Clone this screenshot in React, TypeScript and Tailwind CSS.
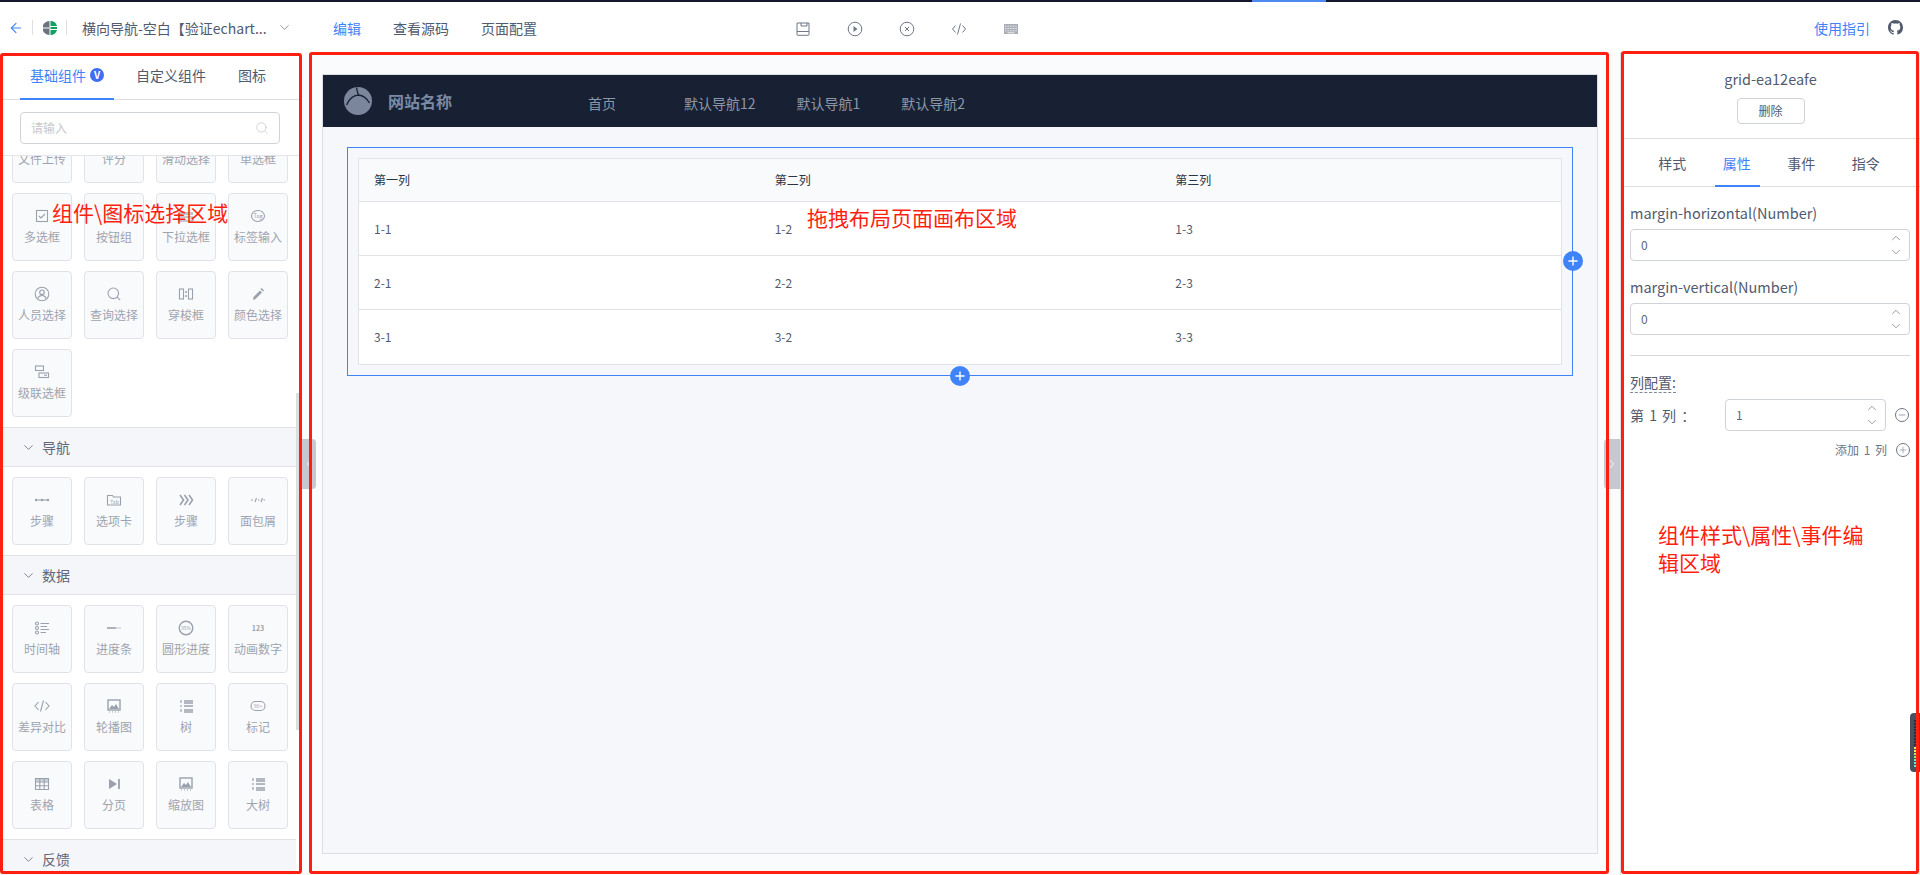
import { ArrowLeft, ChevronDown, ChevronLeft, ChevronRight, ChevronUp, Minus, Plus, Search } from "lucide-react";
import type { ReactNode } from "react";

type CardItem = {
  label: string;
  icon?: ReactNode;
};

const stroke = { fill: "none", stroke: "currentColor", strokeWidth: 1.1 };

function Glyph({ children }: { children: ReactNode }) {
  return (
    <svg viewBox="0 0 16 16" className="h-4 w-4 text-[#9aa1ad]">
      {children}
    </svg>
  );
}

const treeIcon = (
  <Glyph>
    <path d="M2 2h2v3H2zM2 7h2v2H2zM2 11h2v3H2z" fill="currentColor" opacity="0.6" />
    <path d="M6 3h9M6 5h9M6 8h9M6 12h9M6 14h9" {...stroke} strokeWidth="1.4" />
  </Glyph>
);

const imageIcon = (
  <Glyph>
    <rect x="2" y="2" width="12" height="10" {...stroke} strokeWidth="1.4" />
    <path d="M3 11l3-4 2 2 2-3 3 5z" fill="currentColor" />
    <path d="M3 14h1M6 14h1M9 14h1M12 14h1" {...stroke} />
  </Glyph>
);

const componentCards: CardItem[] = [
  { label: "文件上传" },
  { label: "评分" },
  { label: "滑动选择" },
  { label: "单选框" },
  {
    label: "多选框",
    icon: (
      <Glyph>
        <rect x="2.5" y="2.5" width="11" height="11" {...stroke} />
        <path d="M5 8l2 2 4-4" {...stroke} />
      </Glyph>
    ),
  },
  {
    label: "按钮组",
    icon: (
      <Glyph>
        <rect x="2" y="5" width="12" height="6" {...stroke} />
      </Glyph>
    ),
  },
  {
    label: "下拉选框",
    icon: (
      <Glyph>
        <rect x="1" y="4" width="14" height="3" fill="currentColor" opacity="0.6" />
        <rect x="1" y="9" width="14" height="4" {...stroke} />
      </Glyph>
    ),
  },
  {
    label: "标签输入",
    icon: (
      <Glyph>
        <ellipse cx="8" cy="8" rx="6.5" ry="5.5" {...stroke} />
        <text x="8" y="10" fontSize="5.5" textAnchor="middle" fill="currentColor">
          Tag
        </text>
      </Glyph>
    ),
  },
  {
    label: "人员选择",
    icon: (
      <Glyph>
        <circle cx="8" cy="8" r="6.8" {...stroke} />
        <circle cx="8" cy="6.3" r="2.3" {...stroke} />
        <path d="M3.8 12.5c.7-2.2 2.2-3 4.2-3s3.5.8 4.2 3" {...stroke} />
      </Glyph>
    ),
  },
  {
    label: "查询选择",
    icon: (
      <Glyph>
        <circle cx="7.3" cy="7.3" r="5.3" {...stroke} />
        <path d="M11.2 11.2l3 3" {...stroke} />
      </Glyph>
    ),
  },
  {
    label: "穿梭框",
    icon: (
      <Glyph>
        <rect x="1.5" y="3" width="4" height="10" {...stroke} />
        <rect x="10.5" y="3" width="4" height="10" {...stroke} />
        <path d="M7 6h2M7 10h2" {...stroke} strokeWidth="1.5" />
      </Glyph>
    ),
  },
  {
    label: "颜色选择",
    icon: (
      <Glyph>
        <path d="M3 14l.5-3 6.5-6.5 2 2L5.500 13z" fill="currentColor" />
        <path d="M11 2.5l2.5 2.5" {...stroke} strokeWidth="1.6" />
      </Glyph>
    ),
  },
  {
    label: "级联选框",
    icon: (
      <Glyph>
        <rect x="1.5" y="2" width="8" height="4.5" {...stroke} />
        <rect x="5" y="9" width="9.5" height="4.5" {...stroke} />
        <path d="M10 11.2h3" {...stroke} />
      </Glyph>
    ),
  },
];

const navCards: CardItem[] = [
  {
    label: "步骤",
    icon: (
      <Glyph>
        <circle cx="2" cy="8" r="1.2" fill="currentColor" />
        <circle cx="8" cy="8" r="1.2" fill="currentColor" />
        <circle cx="14" cy="8" r="1.2" fill="currentColor" />
        <path d="M2 8h12" {...stroke} />
      </Glyph>
    ),
  },
  {
    label: "选项卡",
    icon: (
      <Glyph>
        <path d="M1.5 3.5h5l1 1.5h7v8h-13z" {...stroke} />
        <text x="8.5" y="11.5" fontSize="5" textAnchor="middle" fill="currentColor">
          Tab
        </text>
      </Glyph>
    ),
  },
  {
    label: "步骤",
    icon: (
      <Glyph>
        <path d="M2 3l3.5 5L2 13M6.5 3L10 8l-3.5 5M11 3l3.5 5L11 13" {...stroke} strokeWidth="1.6" />
      </Glyph>
    ),
  },
  {
    label: "面包屑",
    icon: (
      <Glyph>
        <path d="M1 8h2M5 10l1.5-4M8 8h1.5M11 10l1.5-4M13.5 8H15" {...stroke} />
      </Glyph>
    ),
  },
];

const dataCards: CardItem[] = [
  {
    label: "时间轴",
    icon: (
      <Glyph>
        <circle cx="3" cy="3.5" r="1.5" {...stroke} />
        <circle cx="3" cy="8" r="1.5" {...stroke} />
        <circle cx="3" cy="12.5" r="1.5" {...stroke} />
        <path d="M6.5 3.5H15M6.5 6.5H13M6.5 9.5H15M6.5 12.5H12" {...stroke} />
      </Glyph>
    ),
  },
  {
    label: "进度条",
    icon: (
      <Glyph>
        <path d="M1 8h9" {...stroke} strokeWidth="1.6" />
        <path d="M10 8h5" {...stroke} strokeWidth="1.6" opacity="0.35" />
      </Glyph>
    ),
  },
  {
    label: "圆形进度",
    icon: (
      <Glyph>
        <circle cx="8" cy="8" r="6.8" {...stroke} strokeWidth="1.4" />
        <text x="8" y="9.8" fontSize="4.8" textAnchor="middle" fill="currentColor">
          85%
        </text>
      </Glyph>
    ),
  },
  {
    label: "动画数字",
    icon: (
      <Glyph>
        <text x="8" y="10.5" fontSize="7" fontWeight="700" textAnchor="middle" fill="currentColor">
          123
        </text>
      </Glyph>
    ),
  },
  {
    label: "差异对比",
    icon: (
      <Glyph>
        <path d="M4.5 4L1 8l3.5 4M11.5 4L15 8l-3.5 4M9.5 2.5l-3 11" {...stroke} />
      </Glyph>
    ),
  },
  { label: "轮播图", icon: imageIcon },
  { label: "树", icon: treeIcon },
  {
    label: "标记",
    icon: (
      <Glyph>
        <rect x="1" y="3.5" width="14" height="9" rx="4.5" {...stroke} />
        <text x="8" y="9.8" fontSize="5" textAnchor="middle" fill="currentColor">
          99+
        </text>
      </Glyph>
    ),
  },
  {
    label: "表格",
    icon: (
      <Glyph>
        <path d="M1.5 2.5h13v11h-13zM1.5 6h13M1.5 9.8h13M5.800 2.5v11M10.2 2.5v11" {...stroke} />
        <rect x="1.5" y="2.5" width="13" height="3" fill="currentColor" opacity="0.5" />
      </Glyph>
    ),
  },
  {
    label: "分页",
    icon: (
      <Glyph>
        <path d="M3 3l8 5-8 5z" fill="currentColor" />
        <path d="M13 3v10" {...stroke} strokeWidth="1.8" />
      </Glyph>
    ),
  },
  { label: "缩放图", icon: imageIcon },
  { label: "大树", icon: treeIcon },
];

const columns = ["第一列", "第二列", "第三列"];
const rows = [
  ["1-1", "1-2", "1-3"],
  ["2-1", "2-2", "2-3"],
  ["3-1", "3-2", "3-3"],
];
const levelMarks = ["#2b2f3a", "#2b2f3a", "#2b2f3a", "#2b2f3a", "#2b2f3a", "#2b2f3a", "#2b2f3a", "#2b2f3a", "#2b2f3a", "#f5e663", "#f5e663", "#b8ef6a", "#8bef8b", "#6cf0b0", "#5cf0d0", "#5cf0d0"];

function CardGrid({ items }: { items: CardItem[] }) {
  return (
    <div className="grid grid-cols-[repeat(4,60px)] gap-x-3 gap-y-2.5 px-3 py-2.5">
      {items.map((item, index) => (
        <div
          key={index}
          className="flex h-[68px] flex-col items-center rounded-sm border border-[#dfe2e8] bg-[#f9fafc] pt-[14px]"
        >
          <div className="flex h-4 items-center justify-center">{item.icon}</div>
          <span className="mt-[3px] text-xs leading-[20px] text-[#9ea4af]">{item.label}</span>
        </div>
      ))}
    </div>
  );
}

function SectionHeader({ title }: { title: string }) {
  return (
    <div className="flex h-10 items-center border-y border-[#e0e2e8] bg-[#f5f6fa] pl-[21px] text-sm text-[#606778]">
      <ChevronDown size={15} strokeWidth={1.6} className="mr-[6px] text-[#808695]" />
      {title}
    </div>
  );
}

function NumberInput({ value, className }: { value: string; className: string }) {
  return (
    <div className={`flex items-center justify-between rounded-sm border border-[#cfd2d8] bg-white pl-[10px] pr-[6px] text-xs text-[#606778] ${className}`}>
      <span>{value}</span>
      <div className="flex flex-col text-[#808695]">
        <ChevronUp size={14} strokeWidth={1.4} />
        <ChevronDown size={14} strokeWidth={1.4} />
      </div>
    </div>
  );
}

function RedBox({ className }: { className: string }) {
  return <div className={`pointer-events-none absolute rounded-[3px] border-[3px] border-[#ff1f10] ${className}`} />;
}

function AddDot({ className }: { className: string }) {
  return (
    <div className={`absolute flex h-5 w-5 items-center justify-center rounded-full bg-[#3f83f8] text-white ${className}`}>
      <Plus size={14} strokeWidth={2.4} />
    </div>
  );
}

function ToolIcon({ children }: { children: ReactNode }) {
  return (
    <svg viewBox="0 0 16 16" className="h-4 w-4 text-[#6f7685]">
      {children}
    </svg>
  );
}

export default function App() {
  return (
    <div
      className="relative flex h-screen flex-col overflow-hidden bg-white"
      style={{ fontFamily: '"Noto Sans CJK SC", "Noto Sans", sans-serif' }}
    >
      {/* Progress strip */}
      <div className="flex h-0.5 shrink-0 bg-[#14172b]">
        <div className="ml-[1252px] w-[74px] bg-[#4d8af0]" />
      </div>

      {/* Header */}
      <header className="flex h-[51px] shrink-0 items-center text-sm text-[#515a6e]">
        <div className="flex w-[795px] shrink-0 items-center">
          <ArrowLeft size={16} strokeWidth={1.6} className="ml-[8px] text-[#3f83f8]" />
          <div className="ml-[8px] h-[15px] w-px bg-[#dcdee2]" />
          <svg viewBox="0 0 14 14" className="ml-[10px] h-[14px] w-[14px]">
            <path d="M6.5 0a7 7 0 000 14z" fill="#6b7280" />
            <path d="M7.5 0a7 7 0 016.5 5H7.5zM7.5 6H14v2H7.5zM7.5 9H14a7 7 0 01-6.5 5z" fill="#12a15f" />
            <path d="M0 7h6.5" stroke="#fff" strokeWidth="1" />
          </svg>
          <div className="ml-[9px] h-[15px] w-px bg-[#dcdee2]" />
          <span className="ml-[15px] w-[190px]">横向导航-空白【验证echart...</span>
          <ChevronDown size={15} strokeWidth={1.4} className="ml-[5px] text-[#808695]" />
          <span className="ml-[41px] text-[#3f83f8]">编辑</span>
          <span className="ml-8">查看源码</span>
          <span className="ml-8">页面配置</span>
        </div>
        <div className="mt-[2px] flex items-center gap-9">
          <ToolIcon>
            <path d="M2 2h12v11.5a.8.8 0 01-.8.8H2.800a.8.8 0 01-.8-.8z" fill="none" stroke="currentColor" />
            <path d="M2 10.5h12" stroke="currentColor" />
            <path d="M6 2v3h6V2" fill="none" stroke="currentColor" />
          </ToolIcon>
          <ToolIcon>
            <circle cx="8" cy="8" r="6.8" fill="none" stroke="currentColor" />
            <path d="M6.5 5l4 3-4 3z" fill="currentColor" />
          </ToolIcon>
          <ToolIcon>
            <circle cx="8" cy="8" r="6.8" fill="none" stroke="currentColor" />
            <path d="M6 6l4 4M10 6l-4 4" stroke="currentColor" />
          </ToolIcon>
          <ToolIcon>
            <path d="M4.5 4.5L1.500 8l3 3.500M11.5 4.5l3 3.5-3 3.500M9.500 2.5l-3 11" fill="none" stroke="currentColor" />
          </ToolIcon>
          <ToolIcon>
            <rect x="1" y="3" width="14" height="10" fill="#a9adb5" />
            <path d="M2 5.2h12M2 7.5h12M2 9.8h12" stroke="#fff" strokeWidth="0.8" strokeDasharray="1 0.6" />
            <path d="M4.5 11.8h7" stroke="#fff" strokeWidth="0.8" />
          </ToolIcon>
        </div>
        <span className="ml-auto text-[#3f83f8]">使用指引</span>
        <svg viewBox="0 0 16 16" className="ml-[18px] mr-[17px] h-[15px] w-[15px] text-[#515a6e]" fill="currentColor">
          <path d="M8 0C3.58 0 0 3.58 0 8c0 3.54 2.29 6.53 5.47 7.59.4.07.55-.17.55-.38 0-.19-.01-.82-.01-1.49-2.01.37-2.53-.49-2.69-.94-.09-.23-.48-.94-.82-1.13-.28-.15-.68-.52-.01-.53.63-.01 1.08.58 1.23.82.72 1.21 1.87.87 2.33.66.07-.52.28-.87.51-1.07-1.78-.2-3.64-.89-3.64-3.95 0-.87.31-1.59.82-2.15-.08-.2-.36-1.02.08-2.12 0 0 .67-.21 2.2.82.64-.18 1.32-.27 2-.27s1.36.09 2 .27c1.53-1.04 2.2-.82 2.2-.82.44 1.1.16 1.92.08 2.12.51.56.82 1.27.82 2.15 0 3.07-1.87 3.75-3.65 3.95.29.25.54.73.54 1.48 0 1.07-.01 1.93-.01 2.2 0 .21.15.46.55.38A8.01 8.01 0 0016 8c0-4.42-3.58-8-8-8z" />
        </svg>
      </header>

      <main className="flex min-h-0 flex-1">
        {/* Component picker */}
        <aside className="relative flex w-[302px] shrink-0 flex-col overflow-hidden bg-white">
          <div className="flex h-[47px] shrink-0 items-center border-b border-[#dcdee2] pb-[2px] pl-[30px] text-sm text-[#515a6e]">
            <span className="text-[#3f83f8]">基础组件</span>
            <span className="ml-1 flex h-[14px] w-[14px] items-center justify-center rounded-full bg-[#3f6ff0] text-[10px] font-bold leading-none text-white">
              V
            </span>
            <span className="ml-8">自定义组件</span>
            <span className="ml-8">图标</span>
          </div>
          <div className="absolute left-5 top-[45px] h-0.5 w-[94px] bg-[#3f83f8]" />
          <div className="shrink-0 border-b border-[#e3e5ea] px-5 pb-[11px] pt-3">
            <div className="flex h-8 w-[260px] items-center justify-between rounded-sm border border-[#cfd2d8] pl-[10px] pr-[10px] text-xs text-[#c5c8ce]">
              请输入
              <Search size={14} strokeWidth={1.3} />
            </div>
          </div>
          <div className="min-h-0 flex-1 overflow-hidden pr-[6px]">
            <div className="-mt-[51px]">
              <CardGrid items={componentCards} />
              <SectionHeader title="导航" />
              <CardGrid items={navCards} />
              <SectionHeader title="数据" />
              <CardGrid items={dataCards} />
              <SectionHeader title="反馈" />
            </div>
          </div>
          <div className="absolute left-[296px] top-[340px] h-[337px] w-[3px] bg-[#dcdee2]" />
        </aside>

        {/* Canvas */}
        <section className="relative min-w-0 flex-1 bg-[#fafbfc] pb-[21px] pl-5 pr-[22px] pt-[21px]">
          <div className="h-full border border-[#dcdee2] bg-[#f6f7fb]">
            <div className="flex h-[52px] items-center bg-[#182133] pl-[21px] text-sm text-[#8d97a8]">
              <svg viewBox="0 0 28 28" className="h-7 w-7">
                <circle cx="14" cy="14" r="14" fill="#7b869c" />
                <path d="M2.5 18C5 12 9 8.5 14.5 8c5 .5 8.5 3.5 11 8M12.5.5c.5 3 1 5 2 7.5" fill="none" stroke="#182133" strokeWidth="1.3" />
              </svg>
              <span className="ml-[16px] text-base font-bold text-[#7a8aa5]">网站名称</span>
              <span className="ml-[136px] mr-[68px] mt-1">首页</span>
              <div className="mt-1 flex gap-[41px]">
                <span>默认导航12</span>
                <span>默认导航1</span>
                <span>默认导航2</span>
              </div>
            </div>
            <div className="relative mx-6 mt-5 border border-[#3f83f8] p-2.5">
              <div className="border border-[#e1e3e8] bg-white text-xs">
                <div className="grid h-[43px] grid-cols-3 items-center border-b border-[#e1e3e8] bg-[#f9fafb] text-[#2b3445]">
                  {columns.map((col) => (
                    <span key={col} className="pl-[15px]">
                      {col}
                    </span>
                  ))}
                </div>
                {rows.map((row, index) => (
                  <div
                    key={index}
                    className={`grid h-[54px] grid-cols-3 items-center text-[#515a6e] ${index < rows.length - 1 ? "border-b border-[#e1e3e8]" : ""}`}
                  >
                    {row.map((cell) => (
                      <span key={cell} className="pl-[15px]">
                        {cell}
                      </span>
                    ))}
                  </div>
                ))}
              </div>
              <AddDot className="-right-[11px] top-[103px]" />
              <AddDot className="-bottom-[11px] left-[602px]" />
            </div>
          </div>

          <div className="absolute left-0 top-[386px] flex h-[50px] w-[14px] items-center justify-center rounded-r bg-[#c5c8ce] text-white">
            <ChevronLeft size={14} strokeWidth={1.5} />
          </div>
          <div className="absolute right-0 top-[386px] flex h-[50px] w-[16px] items-center justify-center rounded-l bg-[#c5c8ce] text-white">
            <ChevronRight size={14} strokeWidth={1.5} />
          </div>
        </section>

        {/* Property panel */}
        <aside className="w-[300px] shrink-0 border-l border-[#dcdee2] bg-white text-sm text-[#515a6e]">
          <div className="flex h-[86px] flex-col items-center border-b border-[#dcdee2] pt-4">
            <span className="text-[14.5px] leading-5">grid-ea12eafe</span>
            <button className="mt-[9px] h-[26px] w-[68px] rounded-sm border border-[#cfd2d8] text-xs">删除</button>
          </div>
          <div className="relative flex h-[48px] items-center border-b border-[#dcdee2] pl-[19px]">
            {["样式", "属性", "事件", "指令"].map((tab) => (
              <span key={tab} className={`w-[64.5px] text-center ${tab === "属性" ? "text-[#3f83f8]" : ""}`}>
                {tab}
              </span>
            ))}
            <div className="absolute -bottom-px left-[94px] h-0.5 w-[45px] bg-[#3f83f8]" />
          </div>
          <div className="pl-[9px] pr-[10px]">
            <div className="pt-4 text-[14.5px] leading-[20px]">margin-horizontal(Number)</div>
            <NumberInput value="0" className="mt-1.5 h-8 w-full" />
            <div className="mt-4 text-[14.5px] leading-[20px]">margin-vertical(Number)</div>
            <NumberInput value="0" className="mt-1.5 h-8 w-full" />
            <div className="mt-5 border-t border-[#d5d7dc]" />
            <div className="mt-4 inline-block border-b border-dashed border-[#808695] text-sm leading-[20px]">列配置:</div>
            <div className="mt-[6px] flex items-center text-sm">
              <span className="w-[95px] whitespace-pre [word-spacing:2px]">第 1 列 ：</span>
              <NumberInput value="1" className="h-8 w-[161px]" />
              <div className="ml-[9px] flex h-[14px] w-[14px] items-center justify-center rounded-full border border-[#6f7685]">
                <Minus size={10} strokeWidth={1.3} />
              </div>
            </div>
            <div className="mt-[11px] flex items-center justify-end text-xs text-[#6f7685]">
              <span className="[word-spacing:2px]">添加 1 列</span>
              <div className="ml-[9px] flex h-[14px] w-[14px] items-center justify-center rounded-full border border-[#6f7685]">
                <Plus size={10} strokeWidth={1.3} />
              </div>
            </div>
          </div>
        </aside>
      </main>

      {/* Dev tools handle */}
      <div className="absolute left-[1910px] top-[713px] flex h-[59px] w-[10px] flex-col gap-[1.5px] rounded-l bg-[#4a5060] pl-1 pt-[7px]">
        {levelMarks.map((color, index) => (
          <div key={index} className="h-[1.5px] w-[3px]" style={{ backgroundColor: color }} />
        ))}
      </div>

      {/* Hand drawn annotations */}
      <RedBox className="left-0 top-[53px] h-[821px] w-[302px]" />
      <RedBox className="left-[309px] top-[52px] h-[822px] w-[1300px]" />
      <RedBox className="left-[1621px] top-[51px] h-[823px] w-[298px]" />
      <div className="absolute left-[52px] top-[197px] text-[21px] leading-[30px] text-[#ff1f10]">组件\图标选择区域</div>
      <div className="absolute left-[807px] top-[202px] text-[21px] leading-[30px] text-[#ff1f10]">拖拽布局页面画布区域</div>
      <div className="absolute left-[1658px] top-[520px] w-[220px] text-[21px] leading-[28px] text-[#ff1f10]">组件样式\属性\事件编辑区域</div>
    </div>
  );
}
